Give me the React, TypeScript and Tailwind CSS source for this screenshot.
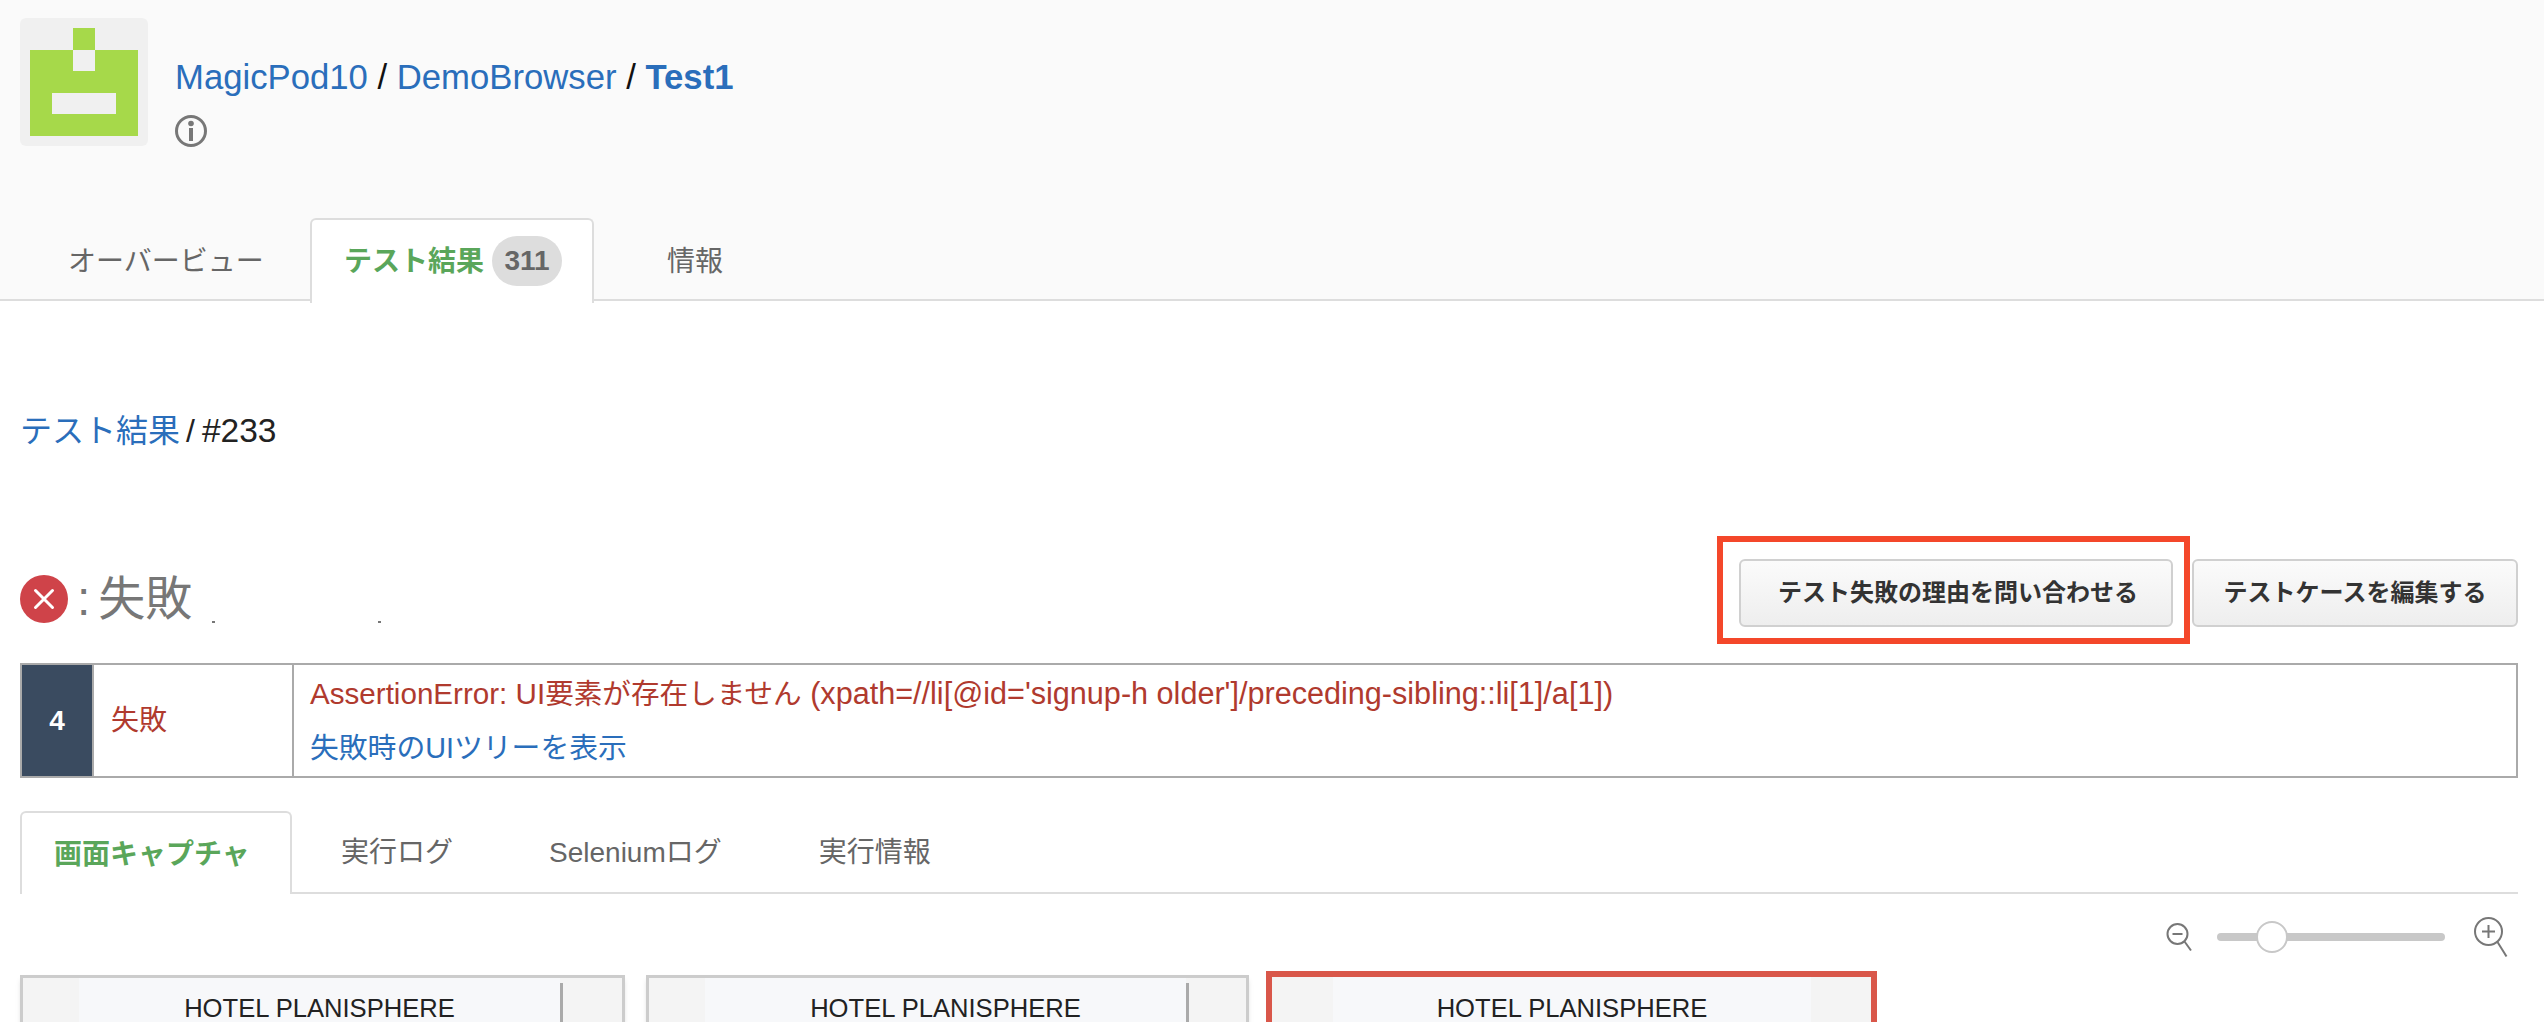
import React from "react";

const fontStack = "font-['Liberation_Sans','Noto_Sans_CJK_JP',sans-serif]";

const Logo: React.FC = () => (
    <div className="w-[128px] h-[128px] bg-[#f0f0f0] rounded-md shrink-0">
        <svg width="128" height="128" viewBox="0 0 128 128">
            <path d="M53 10h22v22H53z" fill="#a6d94a" />
            <path d="M10 32h108v86H10z" fill="#a6d94a" />
            <path d="M53 32h22v21H53zM32 75h64v21H32z" fill="#f0f0f0" />
        </svg>
    </div>
);

const InfoIcon: React.FC = () => (
    <svg width="32" height="32" viewBox="0 0 32 32" fill="none" stroke="#777" strokeWidth="3">
        <circle cx="16" cy="16" r="14.5" />
        <circle cx="16" cy="8.5" r="2.8" fill="#777" stroke="none" />
        <path d="M16 13v13" strokeWidth="4" />
    </svg>
);

const FailIcon: React.FC = () => (
    <svg width="48" height="48" viewBox="0 0 48 48" className="shrink-0">
        <circle cx="24" cy="24" r="24" fill="#cf4349" />
        <path d="M15.5 15.5l17 17M32.5 15.5l-17 17" stroke="#fff" strokeWidth="3" strokeLinecap="round" />
    </svg>
);

const ZoomOutIcon: React.FC = () => (
    <svg width="26" height="29" viewBox="0 0 26 29" fill="none" stroke="#777" strokeWidth="2">
        <circle cx="11.5" cy="11" r="10" />
        <path d="M6.5 11h10" />
        <path d="M18.5 18.5l6.5 9" />
    </svg>
);

const ZoomInIcon: React.FC = () => (
    <svg width="34" height="41" viewBox="0 0 34 41" fill="none" stroke="#777" strokeWidth="2">
        <circle cx="14.5" cy="14.5" r="13.5" />
        <path d="M8 14.5h13M14.5 8v13" />
        <path d="M23.5 25l9 14.5" />
    </svg>
);

const ScreenCard: React.FC<{ highlighted?: boolean; scrollbar?: boolean; className: string }> = ({ highlighted, scrollbar, className }) => (
    <div className={`${className} shrink-0 h-[100px] flex bg-[#f4f4f4] ${highlighted ? "border-[6px] border-[#d9574a] border-b-0" : "border-[3px] border-[#ccc] border-b-0 shadow-md"}`}>
        <div className={`${highlighted ? "ml-[61px] w-[478px] pt-[17px]" : "ml-[56px] w-[481px] pt-[16px]"} bg-[#f7f8fa] text-center text-[#222] text-[25.6px] leading-[29px]`}>
            HOTEL PLANISPHERE
        </div>
        {scrollbar && <div className="w-[3px] mt-[5px] bg-[#aaa]" />}
    </div>
);

const App: React.FC = () => {
    return (
        <div className={`${fontStack} h-[1022px] w-full overflow-hidden bg-white`}>
            <header className="h-[301px] bg-[#fafafa] border-b-2 border-[#ddd] flex flex-col justify-between">
                <div className="flex pt-[18px] pl-5 gap-[27px]">
                    <Logo />
                    <div className="pt-[37px]">
                        <h1 className="text-[34.7px] leading-[44px] text-[#111]">
                            <a className="text-[#2a6ebb]">MagicPod10</a> / <a className="text-[#2a6ebb]">DemoBrowser</a> / <a className="text-[#2a6ebb] font-bold">Test1</a>
                        </h1>
                        <div className="mt-[16px]">
                            <InfoIcon />
                        </div>
                    </div>
                </div>
                <nav className="flex items-start h-[83px] -mb-[2px] text-[28px] text-[#666]">
                    <div className="w-[310px] pl-[68px] pt-[23px]">オーバービュー</div>
                    <div className="w-[284px] h-[85px] bg-white border-2 border-b-0 border-[#ddd] rounded-t-md flex items-start pl-[32px] pt-[16px] gap-[8px]">
                        <span className="text-[#5aa65a] font-bold pt-[5px]">テスト結果</span>
                        <span className="w-[70px] h-[50px] rounded-full bg-[#ddd] text-[#666] font-bold flex items-center justify-center">311</span>
                    </div>
                    <div className="pl-[73px] pt-[23px]">情報</div>
                </nav>
            </header>

            <main className="pl-5 pr-[26px]">
                <div className="pt-[108px] text-[32px] leading-[44px] text-[#222]">
                    <a className="text-[#2a6ebb]">テスト結果</a><span className="ml-[6px]">/</span><span className="ml-[7px] text-[33.5px]">#233</span>
                </div>

                <div className="mt-[106px] flex justify-between items-end">
                    <div className="flex items-center h-[48px] mb-[4px] text-[#777] text-[48px]">
                        <FailIcon />
                        <span className="ml-[9px] leading-[48px]">:</span>
                        <span className="ml-[8px] leading-[48px] text-[47px]">失敗</span>
                        <span className="w-[3px] h-[2px] bg-[#777] self-end ml-[20px]" />
                        <span className="w-[3px] h-[2px] bg-[#777] self-end ml-[163px]" />
                    </div>
                    <div className="flex gap-[19px] text-[24px] font-bold text-[#333]">
                        <div className="relative">
                            <button className="w-[434px] h-[68px] pl-[4px] rounded-md border-2 border-[#d0d0d0] bg-gradient-to-b from-[#fbfbfb] to-[#eee]">テスト失敗の理由を問い合わせる</button>
                            <div className="absolute -left-[22px] -right-[17px] -top-[23px] -bottom-[17px] border-[6px] border-[#f4472a]" />
                        </div>
                        <button className="w-[326px] h-[68px] rounded-md border-2 border-[#d0d0d0] bg-gradient-to-b from-[#fbfbfb] to-[#eee]">テストケースを編集する</button>
                    </div>
                </div>

                <div className="mt-[36px] h-[115px] border-2 border-[#aaa] flex text-[28px]">
                    <div className="w-[70px] bg-[#3a4b60] text-white font-bold flex items-center justify-center">4</div>
                    <div className="w-[202px] border-l-2 border-r-2 border-[#aaa] pl-[17px] flex items-center text-[#b03a2e]">失敗</div>
                    <div className="pl-[16px] flex flex-col pt-[11px] gap-[19px] leading-[35px]">
                        <div className="text-[#b03a2e] text-[29.6px]">
                            AssertionError: UI<span className="text-[28.6px]">要素が存在しません</span><span className="text-[30.6px]"> (xpath=//li[@id='signup-h older']/preceding-sibling::li[1]/a[1])</span>
                        </div>
                        <a className="text-[#2a6ebb] text-[28.8px]">失敗時のUIツリーを表示</a>
                    </div>
                </div>

                <nav className="mt-[33px] h-[83px] border-b-2 border-[#ddd] flex items-start text-[28px] text-[#666]">
                    <div className="w-[272px] h-[83px] bg-white border-2 border-b-0 border-[#ddd] rounded-t-md pl-[32px] pt-[21px] text-[#5aa65a] font-bold">画面キャプチャ</div>
                    <div className="ml-[49px] pt-[21px]">実行ログ</div>
                    <div className="ml-[96px] pt-[21px]">Seleniumログ</div>
                    <div className="ml-[97px] pt-[21px]">実行情報</div>
                </nav>

                <div className="h-[64px] pt-[22px] flex items-center justify-end pr-[10px]">
                    <ZoomOutIcon />
                    <div className="relative w-[228px] h-[8px] ml-[25px] mr-[29px] rounded-full bg-[#c8c8c8]">
                        <div className="absolute left-[39px] -top-[12px] w-[32px] h-[32px] rounded-full bg-white border-2 border-[#c8c8c8]" />
                    </div>
                    <ZoomInIcon />
                </div>

                <div className="flex items-start">
                    <ScreenCard scrollbar className="w-[605px] mt-[17px]" />
                    <ScreenCard scrollbar className="w-[603px] ml-[21px] mt-[17px]" />
                    <ScreenCard highlighted className="w-[611px] ml-[17px] mt-[13px]" />
                </div>
            </main>
        </div>
    );
};

export default App;
